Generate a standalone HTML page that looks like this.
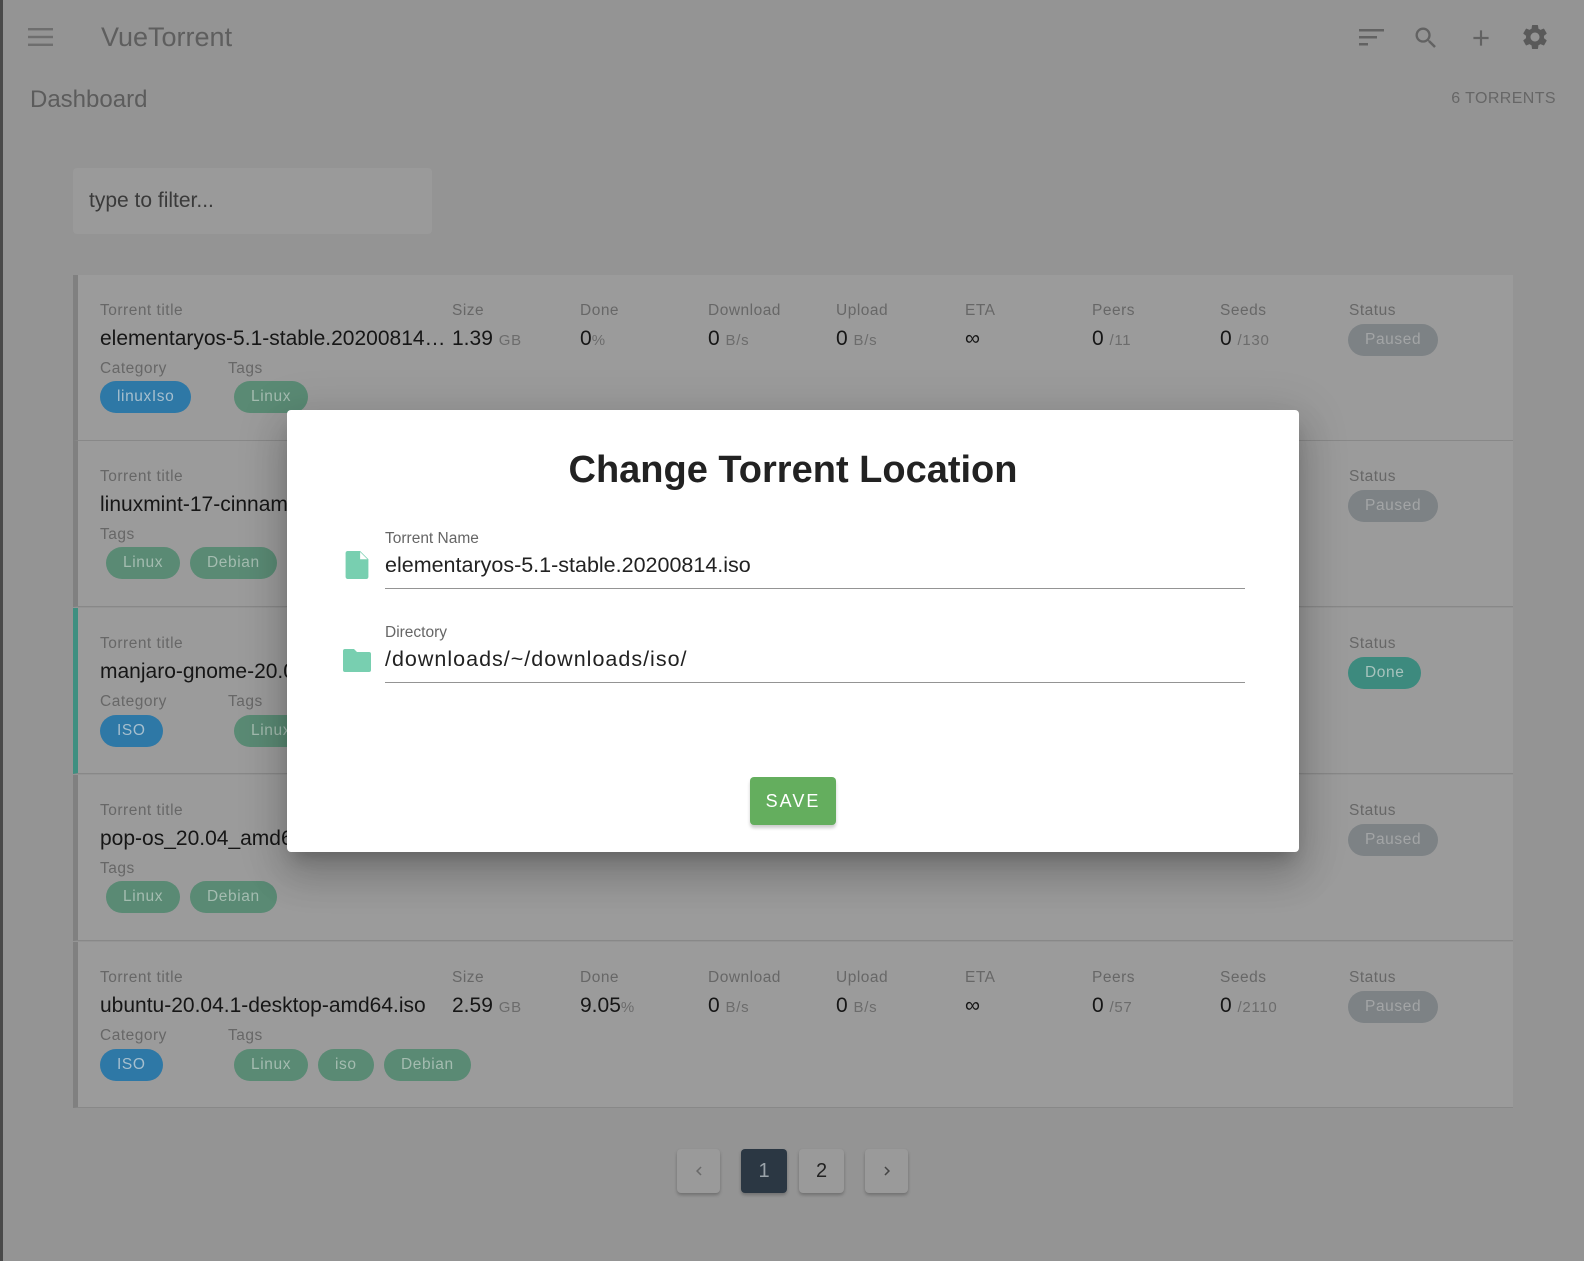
<!DOCTYPE html>
<html><head><meta charset="utf-8"><style>
*{margin:0;padding:0;box-sizing:border-box}
body{width:1584px;height:1261px;background:#949494;font-family:"Liberation Sans",Arial,sans-serif;position:relative;overflow:hidden}
.a{position:absolute;white-space:nowrap}
.lbl{font-size:15.5px;color:#676767;letter-spacing:.5px;height:20px;line-height:20px;margin-top:2px}
.val{font-size:21px;color:#161616;height:26px;line-height:26px;margin-top:2px}
.val small{font-size:15px;color:#6c6c6c;letter-spacing:.7px}
.chip{height:32px;line-height:32px;border-radius:16px;font-size:15.5px;padding:0 17px;color:#a9b6bb;letter-spacing:.6px;margin-top:1px}
.blue{background:#2e78a6;color:#a6bfce}
.green{background:#5a8a74;color:#a4bcb0}
.paused{background:#7d8285;color:#a3a5a6}
.done{background:#3d8a7e;color:#a7c3bd}
.row{position:absolute;left:73px;width:1440px;height:166px;background:#9b9b9b;border-left:5px solid #808080;border-bottom:1px solid #888}
.row.sel{border-left-color:#3e8f80}
.pg{position:absolute;top:1149px;height:44px;border-radius:4px;background:#9a9a9a;box-shadow:0 2px 3px rgba(0,0,0,.25);font-size:20px;text-align:center;line-height:44px;color:#222}
.pg svg{position:absolute;left:50%;top:50%;margin:-9px 0 0 -9px}
</style></head><body>
<div class="a" style="left:0;top:0;width:3px;height:1261px;background:#4a4a4a"></div>
<svg class="a" style="left:28px;top:27px" width="26" height="20" viewBox="0 0 26 20"><rect y="1" width="25" height="2.4" fill="#6e6e6e"/><rect y="8.8" width="25" height="2.4" fill="#6e6e6e"/><rect y="16.6" width="25" height="2.4" fill="#6e6e6e"/></svg>
<div class="a" style="left:101px;top:21px;font-size:27px;line-height:32px;color:#5e5e5e">VueTorrent</div>
<svg class="a" style="left:1359px;top:27px" width="26" height="20"><rect x="0" y="2" width="25" height="2.5" fill="#626262"/><rect x="0" y="9" width="18" height="2.5" fill="#626262"/><rect x="0" y="16" width="9" height="2.5" fill="#626262"/></svg>
<svg class="a" style="left:1412px;top:24px" width="28" height="28" viewBox="0 0 24 24"><path d="M15.5 14h-.79l-.28-.27A6.470 6.470 0 0 0 16 9.5 6.5 6.5 0 1 0 9.5 16c1.610 0 3.090-.59 4.230-1.570l.27.28v.79l5 4.990L20.490 19l-4.990-5zm-6 0C7.010 14 5 11.990 5 9.5S7.010 5 9.5 5 14 7.010 14 9.5 11.990 14 9.5 14z" fill="#626262"/></svg>
<svg class="a" style="left:1468px;top:25px" width="26" height="26" viewBox="0 0 24 24"><path d="M19 13h-6v6h-2v-6H5v-2h6V5h2v6h6v2z" fill="#626262"/></svg>
<svg class="a" style="left:1520px;top:22px" width="30" height="30" viewBox="0 0 24 24"><path d="M19.14 12.94c.04-.3.06-.61.06-.94 0-.32-.02-.64-.07-.94l2.03-1.58a.49.49 0 0 0 .12-.61l-1.92-3.32a.49.49 0 0 0-.59-.22l-2.39.96c-.5-.38-1.03-.7-1.62-.94l-.36-2.54a.48.48 0 0 0-.48-.41h-3.84c-.24 0-.43.17-.47.41l-.36 2.54c-.59.24-1.13.57-1.62.94l-2.39-.96c-.22-.08-.47 0-.59.22L2.74 8.87c-.12.21-.08.47.12.61l2.03 1.58c-.05.3-.09.63-.09.94s.02.64.07.94l-2.03 1.58a.49.49 0 0 0-.12.61l1.92 3.32c.12.22.37.29.59.22l2.39-.96c.5.38 1.03.7 1.62.94l.36 2.54c.05.24.24.41.48.41h3.84c.24 0 .44-.17.47-.41l.36-2.54c.59-.24 1.13-.56 1.62-.94l2.39.96c.22.08.47 0 .59-.22l1.92-3.32c.12-.22.07-.47-.12-.61l-2.01-1.58zM12 15.6c-1.98 0-3.6-1.62-3.6-3.6s1.62-3.6 3.6-3.6 3.6 1.62 3.6 3.6-1.62 3.6-3.6 3.6z" fill="#5a5a5a"/></svg>
<div class="a" style="left:30px;top:85px;font-size:24px;line-height:30px;color:#5c5c5c">Dashboard</div>
<div class="a" style="right:28px;top:89px;font-size:16px;line-height:20px;color:#666;letter-spacing:.4px">6 TORRENTS</div>
<div class="a" style="left:73px;top:168px;width:359px;height:66px;background:#9a9a9a;border-radius:4px"></div>
<div class="a" style="left:89px;top:188px;font-size:21px;line-height:26px;color:#3a3a3a">type to filter...</div>

<div class="row" style="top:275px"></div>
<div class="a lbl" style="left:100px;top:299px">Torrent title</div>
<div class="a val" style="left:100px;top:324px">elementaryos-5.1-stable.20200814…</div>
<div class="a lbl" style="left:452px;top:299px">Size</div><div class="a val" style="left:452px;top:324px">1.39 <small>GB</small></div>
<div class="a lbl" style="left:580px;top:299px">Done</div><div class="a val" style="left:580px;top:324px">0<small>%</small></div>
<div class="a lbl" style="left:708px;top:299px">Download</div><div class="a val" style="left:708px;top:324px">0 <small>B/s</small></div>
<div class="a lbl" style="left:836px;top:299px">Upload</div><div class="a val" style="left:836px;top:324px">0 <small>B/s</small></div>
<div class="a lbl" style="left:965px;top:299px">ETA</div><div class="a val" style="left:965px;top:324px">∞</div>
<div class="a lbl" style="left:1092px;top:299px">Peers</div><div class="a val" style="left:1092px;top:324px">0 <small>/11</small></div>
<div class="a lbl" style="left:1220px;top:299px">Seeds</div><div class="a val" style="left:1220px;top:324px">0 <small>/130</small></div>
<div class="a lbl" style="left:1349px;top:299px">Status</div><div class="a chip paused" style="left:1348px;top:323px">Paused</div>
<div class="a lbl" style="left:100px;top:357px">Category</div><div class="a lbl" style="left:228px;top:357px">Tags</div>
<div class="a chip blue" style="left:100px;top:380px">linuxIso</div>
<div class="a chip green" style="left:234px;top:380px">Linux</div>

<div class="row" style="top:441px"></div>
<div class="a lbl" style="left:100px;top:465px">Torrent title</div>
<div class="a val" style="left:100px;top:490px">linuxmint-17-cinnamon</div>
<div class="a lbl" style="left:100px;top:523px">Tags</div>
<div class="a chip green" style="left:106px;top:546px">Linux</div>
<div class="a chip green" style="left:190px;top:546px">Debian</div>
<div class="a lbl" style="left:1349px;top:465px">Status</div><div class="a chip paused" style="left:1348px;top:489px">Paused</div>

<div class="row sel" style="top:608px"></div>
<div class="a lbl" style="left:100px;top:632px">Torrent title</div>
<div class="a val" style="left:100px;top:657px">manjaro-gnome-20.0.3</div>
<div class="a lbl" style="left:100px;top:690px">Category</div><div class="a lbl" style="left:228px;top:690px">Tags</div>
<div class="a chip blue" style="left:100px;top:714px">ISO</div>
<div class="a chip green" style="left:234px;top:714px">Linux</div>
<div class="a lbl" style="left:1349px;top:632px">Status</div><div class="a chip done" style="left:1348px;top:656px">Done</div>

<div class="row" style="top:775px"></div>
<div class="a lbl" style="left:100px;top:799px">Torrent title</div>
<div class="a val" style="left:100px;top:824px">pop-os_20.04_amd64</div>
<div class="a lbl" style="left:100px;top:857px">Tags</div>
<div class="a chip green" style="left:106px;top:880px">Linux</div>
<div class="a chip green" style="left:190px;top:880px">Debian</div>
<div class="a lbl" style="left:1349px;top:799px">Status</div><div class="a chip paused" style="left:1348px;top:823px">Paused</div>

<div class="row" style="top:942px"></div>
<div class="a lbl" style="left:100px;top:966px">Torrent title</div>
<div class="a val" style="left:100px;top:991px">ubuntu-20.04.1-desktop-amd64.iso</div>
<div class="a lbl" style="left:452px;top:966px">Size</div><div class="a val" style="left:452px;top:991px">2.59 <small>GB</small></div>
<div class="a lbl" style="left:580px;top:966px">Done</div><div class="a val" style="left:580px;top:991px">9.05<small>%</small></div>
<div class="a lbl" style="left:708px;top:966px">Download</div><div class="a val" style="left:708px;top:991px">0 <small>B/s</small></div>
<div class="a lbl" style="left:836px;top:966px">Upload</div><div class="a val" style="left:836px;top:991px">0 <small>B/s</small></div>
<div class="a lbl" style="left:965px;top:966px">ETA</div><div class="a val" style="left:965px;top:991px">∞</div>
<div class="a lbl" style="left:1092px;top:966px">Peers</div><div class="a val" style="left:1092px;top:991px">0 <small>/57</small></div>
<div class="a lbl" style="left:1220px;top:966px">Seeds</div><div class="a val" style="left:1220px;top:991px">0 <small>/2110</small></div>
<div class="a lbl" style="left:1349px;top:966px">Status</div><div class="a chip paused" style="left:1348px;top:990px">Paused</div>
<div class="a lbl" style="left:100px;top:1024px">Category</div><div class="a lbl" style="left:228px;top:1024px">Tags</div>
<div class="a chip blue" style="left:100px;top:1048px">ISO</div>
<div class="a chip green" style="left:234px;top:1048px">Linux</div>
<div class="a chip green" style="left:318px;top:1048px">iso</div>
<div class="a chip green" style="left:384px;top:1048px">Debian</div>

<div class="pg" style="left:677px;width:43px"><svg width="18" height="18" viewBox="0 0 24 24"><path d="M15.41 7.41L14 6l-6 6 6 6 1.41-1.41L10.83 12z" fill="#6a6a6a"/></svg></div>
<div class="pg" style="left:741px;width:46px;background:#2b3743;color:#9aa3aa">1</div>
<div class="pg" style="left:799px;width:45px">2</div>
<div class="pg" style="left:865px;width:43px"><svg width="18" height="18" viewBox="0 0 24 24"><path d="M10 6L8.59 7.41 13.17 12l-4.58 4.59L10 18l6-6z" fill="#444"/></svg></div>

<div class="a" style="left:287px;top:410px;width:1012px;height:442px;background:#fff;border-radius:4px;box-shadow:0 11px 15px -7px rgba(0,0,0,.2),0 24px 38px 3px rgba(0,0,0,.14),0 9px 46px 8px rgba(0,0,0,.12)"></div>
<div class="a" style="left:287px;width:1012px;top:445px;text-align:center;font-size:38px;font-weight:bold;line-height:50px;color:#222">Change Torrent Location</div>
<div class="a" style="left:385px;top:529px;font-size:15.5px;line-height:20px;color:#666">Torrent Name</div>
<div class="a" style="left:385px;top:551px;font-size:21.5px;line-height:28px;color:#222">elementaryos-5.1-stable.20200814.iso</div>
<div class="a" style="left:385px;top:588px;width:860px;height:1px;background:#949494"></div>
<svg class="a" style="left:345px;top:551px" width="24" height="28" viewBox="0 0 22 27"><path d="M2 0h12l8 8v17a2 2 0 0 1-2 2H2a2 2 0 0 1-2-2V2a2 2 0 0 1 2-2z" fill="#78cfb0"/><path d="M14 1v7h7z" fill="#fff"/></svg>
<div class="a" style="left:385px;top:623px;font-size:15.5px;line-height:20px;color:#666">Directory</div>
<div class="a" style="left:385px;top:645px;font-size:21.5px;line-height:28px;color:#222;letter-spacing:1px">/downloads/~/downloads/iso/</div>
<div class="a" style="left:385px;top:682px;width:860px;height:1px;background:#949494"></div>
<svg class="a" style="left:343px;top:649px" width="28" height="23" viewBox="0 0 28 23"><path d="M2 0h9l3 3h12a2 2 0 0 1 2 2v16a2 2 0 0 1-2 2H2a2 2 0 0 1-2-2V2a2 2 0 0 1 2-2z" fill="#78cfb0"/></svg>
<div class="a" style="left:750px;top:777px;width:86px;height:48px;background:#64ae5e;border-radius:4px;box-shadow:0 3px 3px rgba(0,0,0,.2);color:#fff;font-size:18px;font-weight:500;letter-spacing:2px;text-align:center;line-height:48px">SAVE</div>
</body></html>
